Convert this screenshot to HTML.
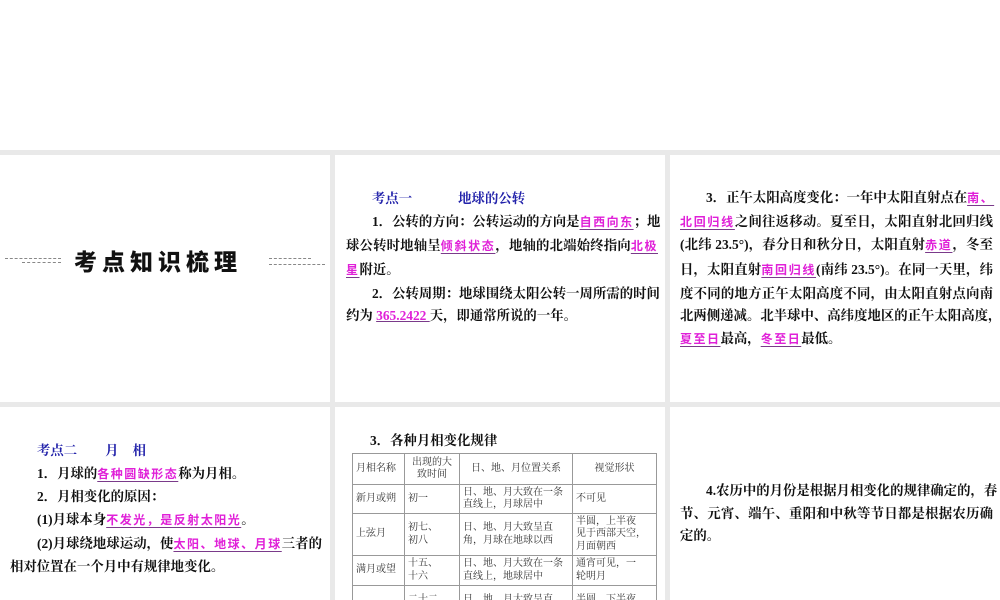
<!DOCTYPE html>
<html><head><meta charset="utf-8"><style>
*{margin:0;padding:0;box-sizing:border-box}
html,body{width:1000px;height:600px;overflow:hidden}
body{background:#fff;position:relative;font-family:"Liberation Serif","Noto Serif CJK SC","Noto Sans CJK SC",serif;font-weight:bold;color:#111}
.g{position:absolute;background:#e9e9e9}
.l{position:absolute;font-size:13.4px;height:24px;line-height:24px;white-space:nowrap}
.j{text-align:justify;text-align-last:justify}
.b{color:#2222aa}
.m{color:#e020d8;text-decoration:underline;text-decoration-color:#7a3a8a;text-underline-offset:3px;font-family:"Noto Sans CJK SC",sans-serif;font-size:12px;letter-spacing:1.5px}
table{position:absolute;left:352px;top:453px;width:304px;border-collapse:collapse;table-layout:fixed;font-weight:normal;font-size:10px;line-height:12.5px;color:#333}
td{border:1px solid #999;padding:1px 3px;vertical-align:middle;overflow:hidden}
</style></head><body>
<div class="g" style="left:0;top:150px;width:1000px;height:5px"></div>
<div class="g" style="left:0;top:402px;width:1000px;height:5px"></div>
<div class="g" style="left:330px;top:150px;width:5px;height:450px"></div>
<div class="g" style="left:665px;top:150px;width:5px;height:450px"></div>

<div style="position:absolute;left:5px;top:258px;width:56px;border-top:1px dashed #888"></div>
<div style="position:absolute;left:22px;top:262px;width:39px;border-top:1px dashed #888"></div>
<div style="position:absolute;left:269px;top:258px;width:42px;border-top:1px dashed #888"></div>
<div style="position:absolute;left:269px;top:264px;width:56px;border-top:1px dashed #888"></div>
<div style="position:absolute;left:74px;top:245px;font-family:'Noto Sans CJK SC',sans-serif;font-size:23px;font-weight:900;letter-spacing:5px;line-height:30px;color:#111">考点知识梳理</div>

<div class="l b" style="left:372px;top:187px">考点一<span style="display:inline-block;width:46px"></span>地球的公转</div>
<div class="l j" style="left:372px;top:210px;width:286px">1．公转的方向：公转运动的方向是<span class="m">自西向东</span>；地</div>
<div class="l j" style="left:346px;top:234px;width:312px">球公转时地轴呈<span class="m">倾斜状态</span>，地轴的北端始终指向<span class="m">北极</span></div>
<div class="l" style="left:346px;top:258px"><span class="m">星</span>附近。</div>
<div class="l j" style="left:372px;top:282px;width:286px">2．公转周期：地球围绕太阳公转一周所需的时间</div>
<div class="l" style="left:346px;top:304px">约为 <span style="color:#e020d8;text-decoration:underline;text-decoration-color:#7a3a8a">365.2422 </span>天，即通常所说的一年。</div>

<div class="l j" style="left:706px;top:186px;width:287px">3．正午太阳高度变化：一年中太阳直射点在<span class="m">南、</span></div>
<div class="l j" style="left:680px;top:210px;width:313px"><span class="m">北回归线</span>之间往返移动。夏至日，太阳直射北回归线</div>
<div class="l j" style="left:680px;top:233px;width:313px">(北纬 23.5°)，春分日和秋分日，太阳直射<span class="m">赤道</span>，冬至</div>
<div class="l j" style="left:680px;top:258px;width:313px">日，太阳直射<span class="m">南回归线</span>(南纬 23.5°)。在同一天里，纬</div>
<div class="l j" style="left:680px;top:282px;width:313px">度不同的地方正午太阳高度不同，由太阳直射点向南</div>
<div class="l j" style="left:680px;top:304px;width:313px">北两侧递减。北半球中、高纬度地区的正午太阳高度，</div>
<div class="l" style="left:680px;top:327px"><span class="m">夏至日</span>最高，<span class="m">冬至日</span>最低。</div>

<div class="l b" style="left:37px;top:439px">考点二<span style="display:inline-block;width:28px"></span>月<span style="display:inline-block;width:14px"></span>相</div>
<div class="l" style="left:37px;top:462px">1．月球的<span class="m">各种圆缺形态</span>称为月相。</div>
<div class="l" style="left:37px;top:485px">2．月相变化的原因：</div>
<div class="l" style="left:37px;top:508px">(1)月球本身<span class="m">不发光，是反射太阳光</span>。</div>
<div class="l j" style="left:37px;top:532px;width:285px">(2)月球绕地球运动，使<span class="m">太阳、地球、月球</span>三者的</div>
<div class="l" style="left:10px;top:555px">相对位置在一个月中有规律地变化。</div>

<div class="l" style="left:370px;top:429px">3．各种月相变化规律</div>
<table>
<colgroup><col style="width:52px"><col style="width:55px"><col style="width:113px"><col style="width:84px"></colgroup>
<tr style="height:31px"><td>月相名称</td><td style="text-align:center">出现的大致时间</td><td style="text-align:center">日、地、月位置关系</td><td style="text-align:center">视觉形状</td></tr>
<tr style="height:29px"><td>新月或朔</td><td>初一</td><td>日、地、月大致在一条直线上，月球居中</td><td>不可见</td></tr>
<tr style="height:42px"><td>上弦月</td><td>初七、<br>初八</td><td>日、地、月大致呈直角，月球在地球以西</td><td>半圆，上半夜<br>见于西部天空，<br>月面朝西</td></tr>
<tr style="height:30px"><td>满月或望</td><td>十五、<br>十六</td><td>日、地、月大致在一条直线上，地球居中</td><td>通宵可见，一<br>轮明月</td></tr>
<tr style="height:30px"><td></td><td>二十二、</td><td>日、地、月大致呈直</td><td>半圆，下半夜</td></tr>
</table>

<div class="l j" style="left:706px;top:479px;width:287px">4.农历中的月份是根据月相变化的规律确定的，春</div>
<div class="l j" style="left:680px;top:502px;width:313px">节、元宵、端午、重阳和中秋等节日都是根据农历确</div>
<div class="l" style="left:680px;top:524px">定的。</div>
</body></html>
